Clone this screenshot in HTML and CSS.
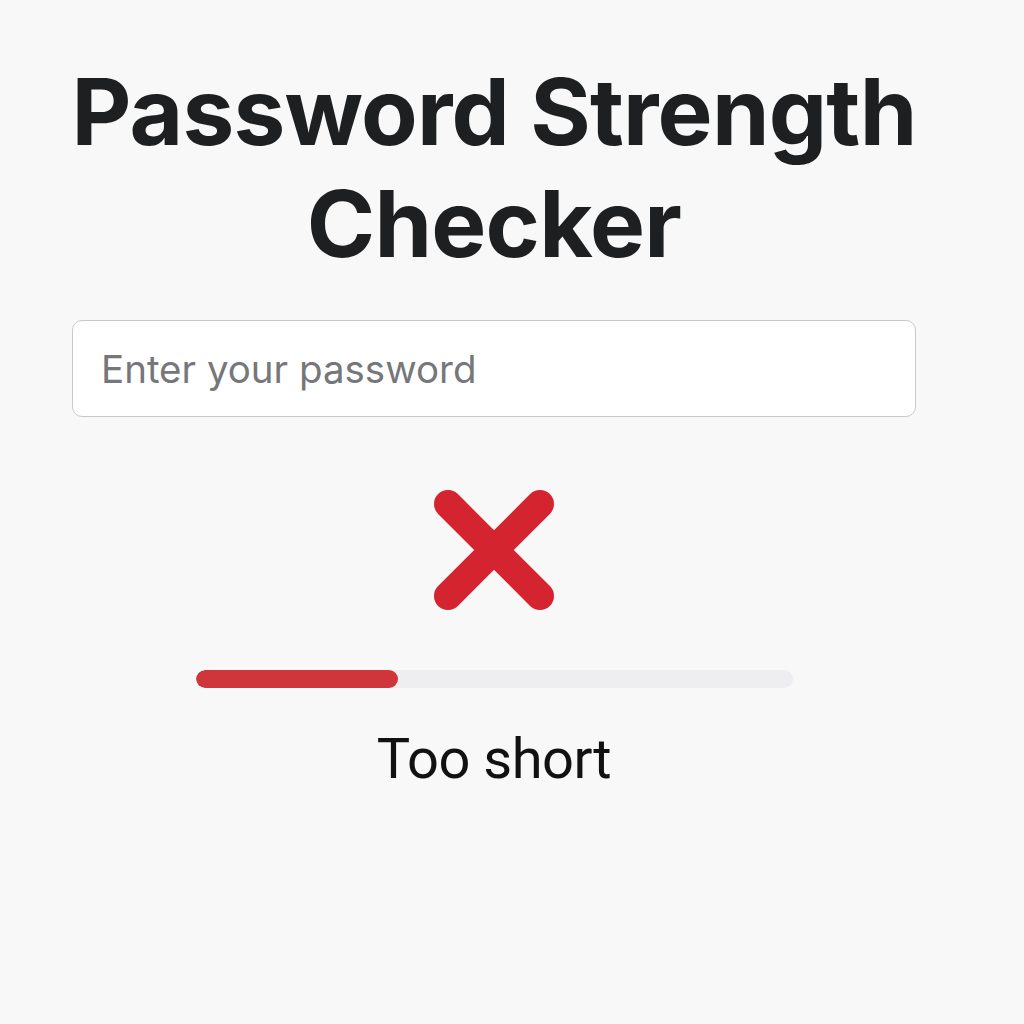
FILE: index.html
```html
<!DOCTYPE html>
<html lang="en">
<head>
<meta charset="utf-8">
<title>Password Strength Checker</title>
<link rel="stylesheet" href="styles.css">
</head>
<body>
<main class="checker">
  <h1 class="title">Password Strength Checker</h1>
  <input class="pw-input" type="password" placeholder="Enter your password">
  <div class="status-icon">
    <svg width="124" height="122" viewBox="0 0 124 122">
      <path d="M16 15 L108 107 M108 15 L16 107" stroke="#d3242f" stroke-width="28" stroke-linecap="round" fill="none"/>
    </svg>
  </div>
  <div class="meter"><div class="meter-fill" style="width:34%"></div></div>
  <p class="verdict">Too short</p>
</main>
</body>
</html>
```
FILE: styles.css
```css
html, body {
  margin: 0;
  padding: 0;
  background: #f8f8f8;
}
body {
  font-family: Inter, "Liberation Sans", sans-serif;
}
.checker {
  width: 844px;
  margin-left: 72px;
  display: flex;
  flex-direction: column;
  align-items: center;
}
.title {
  margin: 55px 0 0;
  font-size: 92.5px;
  line-height: 112px;
  font-weight: 700;
  color: #1d1f21;
  text-align: center;
  width: 880px;
  letter-spacing: -0.8px;
}
.pw-input {
  box-sizing: border-box;
  margin-top: 41px;
  width: 844px;
  height: 97px;
  border: 1.5px solid #c9c9cb;
  border-radius: 10px;
  background: #fff;
  padding: 0 28px;
  font-family: Inter, "Liberation Sans", sans-serif;
  font-size: 38.5px;
  color: #333;
  outline: none;
}
.pw-input::placeholder {
  color: #76777a;
}
.status-icon {
  margin-top: 72px;
  height: 122px;
  display: flex;
}
.meter {
  margin-top: 59px;
  width: 597px;
  height: 18px;
  border-radius: 9px;
  background: #eeeef0;
  overflow: hidden;
}
.meter-fill {
  height: 100%;
  background: #cf363b;
  border-radius: 9px;
}
.verdict {
  margin: 36px 0 0;
  font-family: Roboto, "Liberation Sans", sans-serif;
  font-size: 56px;
  line-height: 70px;
  color: #111;
  letter-spacing: -0.5px;
}
```
